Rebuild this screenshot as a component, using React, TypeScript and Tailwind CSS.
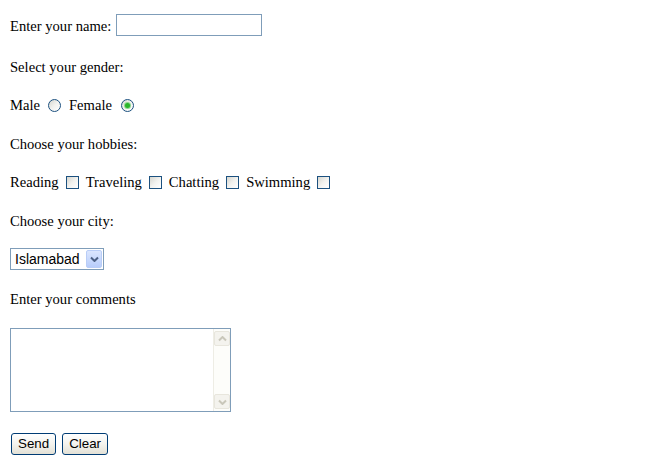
import React from "react";

const serif = "font-['Liberation_Serif','Times_New_Roman',serif]";
const sans = "font-['Liberation_Sans',Arial,sans-serif]";

const Checkbox = () => (
  <input
    type="checkbox"
    readOnly
    className="h-[13px] w-[13px] shrink-0 appearance-none border border-[#1c5180] bg-linear-to-br from-[#d6d6cf] via-[#f2f2ef] to-white"
  />
);

const Radio = ({ checked = false }: { checked?: boolean }) => (
  <span className="relative flex h-[13px] w-[13px] shrink-0 items-center justify-center rounded-full border border-[#1c5180] bg-linear-to-br from-[#d6d6cf] via-[#f2f2ef] to-white">
    <input type="radio" name="gender" readOnly checked={checked} className="absolute inset-0 appearance-none" />
    {checked && <span className="h-[5px] w-[5px] rounded-full bg-[#2bb52b] shadow-[0_0_0_1px_#8fd88f]" />}
  </span>
);

const Chevron = ({ up = false, color }: { up?: boolean; color: string }) => (
  <svg width="9" height="6" viewBox="0 0 9 6" className={up ? "rotate-180" : ""}>
    <path d="M1 1.5 L4.5 5 L8 1.5" fill="none" stroke={color} strokeWidth="2" />
  </svg>
);

const XpButton = ({ label }: { label: string }) => (
  <button
    className={`flex h-[22px] items-center justify-center rounded-[3px] border border-[#003c74] bg-linear-to-b from-white via-[#f4f3ee] to-[#e3e1d6] px-[6px] text-[13.33px] text-black ${sans}`}
  >
    {label}
  </button>
);

export default function App() {
  const hobbies = ["Reading", "Traveling", "Chatting", "Swimming"];

  return (
    <div className={`flex min-h-[458px] flex-col bg-white px-[10px] text-[14.6px] text-black ${serif}`}>
      {/* name */}
      <div className="mt-[14px] flex h-[22px] items-start gap-[5px]">
        <span className="mt-[2px] leading-[20px]">Enter your name:</span>
        <input type="text" className="h-[22px] w-[146px] border border-[#7f9db9] bg-white outline-none" />
      </div>

      <p className="mt-[21px] h-[20px] leading-[20px]">Select your gender:</p>

      <div className="mt-[18px] flex h-[20px] items-center leading-[20px]">
        <span>Male</span>
        <span className="ml-[8px]"><Radio /></span>
        <span className="ml-[8px]">Female</span>
        <span className="ml-[9px]"><Radio checked /></span>
      </div>

      <p className="mt-[19px] h-[20px] leading-[20px]">Choose your hobbies:</p>

      <div className="mt-[18px] flex h-[20px] items-center leading-[20px]">
        {hobbies.map((h, i) => (
          <React.Fragment key={h}>
            <span className={i === 0 ? "" : "ml-[7px]"}>{h}</span>
            <span className="ml-[7px] flex"><Checkbox /></span>
          </React.Fragment>
        ))}
      </div>

      <p className="mt-[19px] h-[20px] leading-[20px]">Choose your city:</p>

      {/* city select */}
      <div className="mt-[17px] flex h-[22px] w-[94px] items-center border border-[#7f9db9] bg-white p-[1px]">
        <span className={`flex-1 pl-[3px] text-[14px] leading-none ${sans}`}>Islamabad</span>
        <span className="flex h-[18px] w-[16px] items-center justify-center rounded-[2px] border border-[#b9cdf7] bg-linear-to-b from-[#dbe6fe] to-[#b8cdfb]">
          <Chevron color="#4d6185" />
        </span>
      </div>

      <p className="mt-[19px] h-[20px] leading-[20px]">Enter your comments</p>

      {/* comments */}
      <div className="mt-[19px] flex h-[84px] w-[221px] border border-[#7f9db9] bg-white">
        <textarea className="flex-1 resize-none overflow-hidden bg-white outline-none" />
        <div className="flex w-[17px] flex-col justify-between border-l border-[#eeede5] bg-[#fdfdfa] py-[2px] pr-[1px]">
          <span className="flex h-[15px] w-[16px] items-center justify-center rounded-[2px] border border-[#e8e6dd] bg-[#f4f3ee]">
            <Chevron up color="#c9c7ba" />
          </span>
          <span className="flex h-[15px] w-[16px] items-center justify-center rounded-[2px] border border-[#e8e6dd] bg-[#f4f3ee]">
            <Chevron color="#c9c7ba" />
          </span>
        </div>
      </div>

      <div className="mt-[21px] flex gap-[6px] pl-[1px]">
        <XpButton label="Send" />
        <XpButton label="Clear" />
      </div>
    </div>
  );
}
